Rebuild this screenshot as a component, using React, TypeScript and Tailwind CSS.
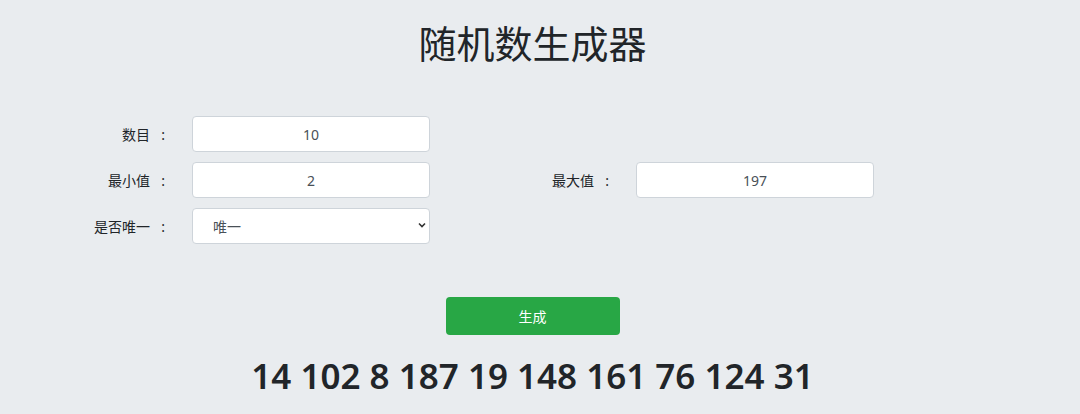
import { useState } from 'react';

const font = '"Noto Sans", "Noto Sans CJK SC", sans-serif';

function Label({ text, width }: { text: string; width: string }) {
  return (
    <label className={`${width} text-right text-[14px] text-[#212529] pr-[27px]`}>
      {text}
      <span className="inline-block w-[15px] text-right">:</span>
    </label>
  );
}

function Field({ label, value, labelWidth }: { label: string; value: string; labelWidth: string }) {
  return (
    <div className="flex items-center">
      <Label text={label} width={labelWidth} />
      <input
        defaultValue={value}
        className="w-[238px] h-[36px] bg-white border border-[#ced4da] rounded-[4px] text-center text-[14px] text-[#495057] outline-none"
      />
    </div>
  );
}

export default function App() {
  const [numbers] = useState([14, 102, 8, 187, 19, 148, 161, 76, 124, 31]);

  return (
    <div className="w-full h-[414px] bg-[#e9ecef] overflow-hidden" style={{ fontFamily: font }}>
      <div className="w-[1065px] flex flex-col items-center">
        <h1 className="mt-[19px] text-[38px] leading-[48px] font-normal text-[#212529]">随机数生成器</h1>

        <div className="self-start mt-[49px] pl-[36px] flex flex-col gap-[10px]">
          <div className="flex">
            <Field label="数目" value="10" labelWidth="w-[156px]" />
          </div>
          <div className="flex">
            <Field label="最小值" value="2" labelWidth="w-[156px]" />
            <Field label="最大值" value="197" labelWidth="w-[206px]" />
          </div>
          <div className="flex items-center">
            <Label text="是否唯一" width="w-[156px]" />
            <div className="relative w-[238px] h-[36px]">
              <select className="appearance-none w-full h-full bg-white border border-[#ced4da] rounded-[4px] pl-[20px] text-[14px] text-[#495057] outline-none">
                <option>唯一</option>
                <option>不唯一</option>
              </select>
              <svg className="absolute right-[4px] top-[14px] pointer-events-none" width="8" height="6" viewBox="0 0 8 6">
                <path d="M1 1.5 L4 4.5 L7 1.5" fill="none" stroke="#333" strokeWidth="1.6" />
              </svg>
            </div>
          </div>
        </div>

        <button className="mt-[53px] w-[174px] h-[38px] bg-[#28a745] rounded-[4px] text-white text-[14px]">生成</button>

        <div className="mt-[17px] text-[35px] leading-[48px] font-semibold text-[#212529]">{numbers.join(' ')}</div>
      </div>
    </div>
  );
}
